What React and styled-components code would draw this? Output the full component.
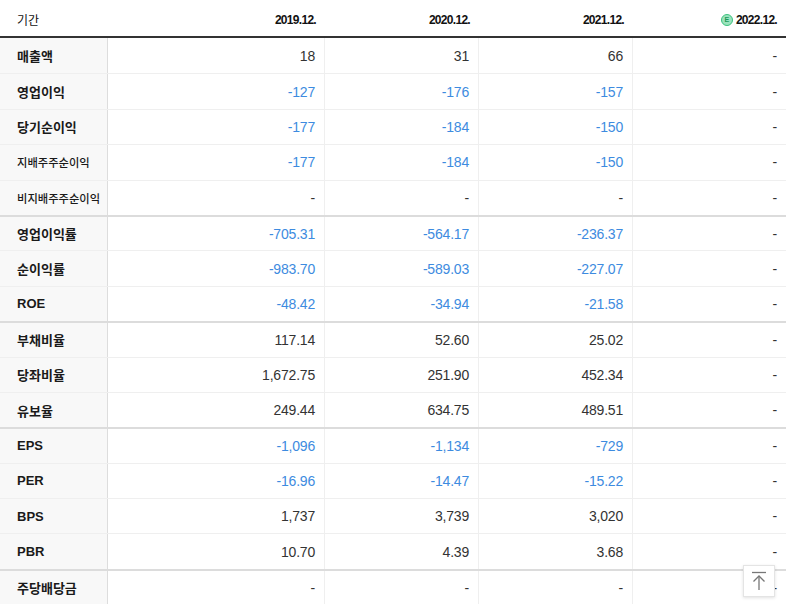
import styled, { createGlobalStyle } from 'styled-components'

const GlobalStyle = createGlobalStyle`
  html, body {
    margin: 0;
    padding: 0;
    background: #fff;
    overflow: hidden;
  }
  body {
    font-family: 'Liberation Sans', 'Noto Sans CJK KR', sans-serif;
  }
`

const periods = [
  { label: '2019.12.' },
  { label: '2020.12.' },
  { label: '2021.12.' },
  { label: '2022.12.', estimate: true },
]

// 그룹별 재무 지표
const groups = [
  [
    { name: '매출액', values: ['18', '31', '66', '-'] },
    { name: '영업이익', values: ['-127', '-176', '-157', '-'] },
    { name: '당기순이익', values: ['-177', '-184', '-150', '-'] },
    { name: '지배주주순이익', small: true, values: ['-177', '-184', '-150', '-'] },
    { name: '비지배주주순이익', small: true, values: ['-', '-', '-', '-'] },
  ],
  [
    { name: '영업이익률', values: ['-705.31', '-564.17', '-236.37', '-'] },
    { name: '순이익률', values: ['-983.70', '-589.03', '-227.07', '-'] },
    { name: 'ROE', values: ['-48.42', '-34.94', '-21.58', '-'] },
  ],
  [
    { name: '부채비율', values: ['117.14', '52.60', '25.02', '-'] },
    { name: '당좌비율', values: ['1,672.75', '251.90', '452.34', '-'] },
    { name: '유보율', values: ['249.44', '634.75', '489.51', '-'] },
  ],
  [
    { name: 'EPS', values: ['-1,096', '-1,134', '-729', '-'] },
    { name: 'PER', values: ['-16.96', '-14.47', '-15.22', '-'] },
    { name: 'BPS', values: ['1,737', '3,739', '3,020', '-'] },
    { name: 'PBR', values: ['10.70', '4.39', '3.68', '-'] },
  ],
  [{ name: '주당배당금', values: ['-', '-', '-', '-'] }],
]

const isNegative = (v) => v.length > 1 && v.startsWith('-')

const App = () => {
  return (
    <Page>
      <GlobalStyle />
      <Table>
        <HeadRow>
          <HeadCell $left>기간</HeadCell>
          {periods.map((p) => (
            <HeadCell key={p.label}>
              {p.estimate && <EstimateBadge>E</EstimateBadge>}
              {p.label}
            </HeadCell>
          ))}
        </HeadRow>
        {groups.map((group, gi) =>
          group.map((row, ri) => (
            <Row key={row.name} $groupStart={gi > 0 && ri === 0}>
              <Label $small={row.small}>{row.name}</Label>
              {row.values.map((v, vi) => (
                <Cell key={vi} $negative={isNegative(v)} $last={vi === 3}>
                  {v}
                </Cell>
              ))}
            </Row>
          ))
        )}
      </Table>
      <TopButton aria-label='맨 위로'>
        <svg width='16' height='20' viewBox='0 0 16 20' fill='none' stroke='#777' strokeWidth='1.3'>
          <line x1='1' y1='1.5' x2='15' y2='1.5' />
          <line x1='8' y1='5' x2='8' y2='19' />
          <polyline points='2.5,10.5 8,5 13.5,10.5' />
        </svg>
      </TopButton>
    </Page>
  )
}

const Page = styled.div`
  position: relative;
  width: 786px;
  height: 605px;
  overflow: hidden;
`

const Table = styled.div`
  display: flex;
  flex-direction: column;
`

const columns = '108px 217px 154px 154px 153px'

const HeadRow = styled.div`
  display: grid;
  grid-template-columns: ${columns};
  height: 36px;
  border-bottom: 2px solid #333;
  align-items: center;
`

const HeadCell = styled.div`
  display: flex;
  align-items: center;
  justify-content: ${(p) => (p.$left ? 'flex-start' : 'flex-end')};
  padding: ${(p) => (p.$left ? '0 0 0 17px' : '0 9px 0 0')};
  padding-top: 3px;
  font-size: 12px;
  font-weight: ${(p) => (p.$left ? 400 : 700)};
  letter-spacing: ${(p) => (p.$left ? '0' : '-0.7px')};
  color: #111;
`

const EstimateBadge = styled.span`
  display: inline-flex;
  align-items: center;
  justify-content: center;
  width: 10px;
  height: 10px;
  margin-right: 3px;
  border-radius: 50%;
  background: #9be3bd;
  border: 1px solid #3cc27e;
  color: #1d9a5a;
  font-size: 7px;
  font-weight: 700;
  letter-spacing: 0;
  line-height: 1;
`

const Row = styled.div`
  display: grid;
  grid-template-columns: ${columns};
  height: 35.4px;
  box-sizing: border-box;
  border-top: ${(p) => (p.$groupStart ? '2px solid #dcdcdc' : '1px solid #efefef')};
  &:nth-child(2) {
    border-top: none;
  }
`

const Label = styled.div`
  display: flex;
  align-items: center;
  padding-left: 17px;
  background: #f8f8f8;
  border-right: 1px solid #dddddd;
  font-family: 'Liberation Sans', 'Noto Sans CJK KR', sans-serif;
  font-size: ${(p) => (p.$small ? '11.3px' : '13px')};
  font-weight: ${(p) => (p.$small ? 500 : 600)};
  color: #1a1a1a;
  white-space: nowrap;
`

const Cell = styled.div`
  display: flex;
  align-items: center;
  justify-content: flex-end;
  padding-right: 9px;
  border-right: ${(p) => (p.$last ? 'none' : '1px solid #efefef')};
  font-size: 14px;
  letter-spacing: -0.2px;
  color: ${(p) => (p.$negative ? '#3d8be0' : '#333')};
`

const TopButton = styled.button`
  position: absolute;
  left: 743px;
  top: 565px;
  width: 32px;
  height: 32px;
  padding: 0;
  display: flex;
  align-items: center;
  justify-content: center;
  background: #fff;
  border: 1px solid #e4e4e4;
  box-shadow: 0 1px 3px rgba(0, 0, 0, 0.12);
  cursor: pointer;
`

export default App
